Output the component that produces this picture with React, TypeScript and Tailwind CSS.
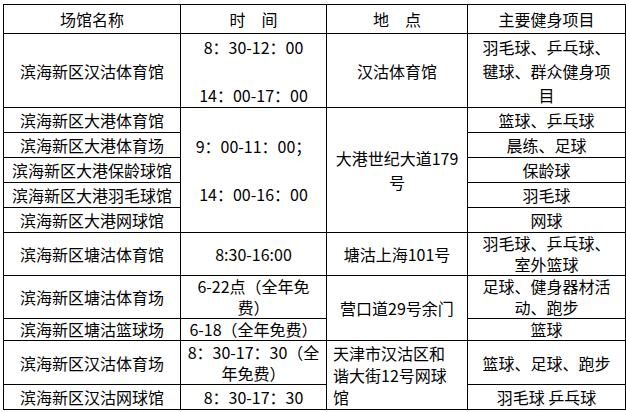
import React from "react";

const font = { fontFamily: '"Noto Sans CJK SC", "Noto Sans", sans-serif' };

const td = "border border-black px-1 py-0 text-center align-middle";

export default function App() {
  return (
    <div className="w-[626px] h-[412px] bg-white pt-[4px] pl-[3px]" style={font}>
      <table className="table-fixed border-collapse text-[16px] leading-[24px] text-black w-[622px]">
        <colgroup>
          <col className="w-[177px]" />
          <col className="w-[146px]" />
          <col className="w-[141px]" />
          <col className="w-[158px]" />
        </colgroup>
        <tbody>
          <tr className="h-[29px]">
            <td className={td}>场馆名称</td>
            <td className={td}>时　间</td>
            <td className={td}>地　点</td>
            <td className={td}>主要健身项目</td>
          </tr>
          <tr className="h-[74px]">
            <td className={td}>滨海新区汉沽体育馆</td>
            <td className={td}>
              8：30-12：00
              <br />
              <br />
              14：00-17：00
            </td>
            <td className={td}>汉沽体育馆</td>
            <td className={td}>
              羽毛球、乒乓球、
              <br />
              毽球、群众健身项
              <br />目
            </td>
          </tr>
          <tr className="h-[24px]">
            <td className={td}>滨海新区大港体育馆</td>
            <td className={td} rowSpan={5}>
              9：00-11：00；
              <br />
              <br />
              14：00-16：00
            </td>
            <td className={td} rowSpan={5}>
              大港世纪大道179
              <br />号
            </td>
            <td className={td}>篮球、乒乓球</td>
          </tr>
          <tr className="h-[25px]">
            <td className={td}>滨海新区大港体育场</td>
            <td className={td}>晨练、足球</td>
          </tr>
          <tr className="h-[25px]">
            <td className={td}>滨海新区大港保龄球馆</td>
            <td className={td}>保龄球</td>
          </tr>
          <tr className="h-[25px]">
            <td className={td}>滨海新区大港羽毛球馆</td>
            <td className={td}>羽毛球</td>
          </tr>
          <tr className="h-[25px]">
            <td className={td}>滨海新区大港网球馆</td>
            <td className={td}>网球</td>
          </tr>
          <tr className="h-[43px]">
            <td className={td}>滨海新区塘沽体育馆</td>
            <td className={td}>8:30-16:00</td>
            <td className={td}>塘沽上海101号</td>
            <td className={`${td} leading-[21px]`}>
              羽毛球、乒乓球、
              <br />
              室外篮球
            </td>
          </tr>
          <tr className="h-[43px]">
            <td className={td}>滨海新区塘沽体育场</td>
            <td className={`${td} leading-[21px]`}>
              6-22点（全年免
              <br />
              费）
            </td>
            <td className={td} rowSpan={2}>
              营口道29号余门
            </td>
            <td className={`${td} leading-[21px]`}>
              足球、健身器材活
              <br />
              动、跑步
            </td>
          </tr>
          <tr className="h-[22px]">
            <td className={`${td} leading-[21px]`}>滨海新区塘沽篮球场</td>
            <td className={`${td} leading-[21px] whitespace-nowrap`}>6-18（全年免费）</td>
            <td className={`${td} leading-[21px]`}>篮球</td>
          </tr>
          <tr className="h-[44px]">
            <td className={td}>滨海新区汉沽体育场</td>
            <td className={`${td} leading-[21px]`}>
              8：30-17：30（全
              <br />
              年免费）
            </td>
            <td className={`${td} text-left pl-[6px] leading-[22px]`} rowSpan={2}>
              天津市汉沽区和
              <br />
              谐大街12号网球
              <br />馆
            </td>
            <td className={td}>篮球、足球、跑步</td>
          </tr>
          <tr className="h-[24px]">
            <td className={td}>滨海新区汉沽网球馆</td>
            <td className={td}>8：30-17：30</td>
            <td className={td}>羽毛球 乒乓球</td>
          </tr>
        </tbody>
      </table>
    </div>
  );
}
